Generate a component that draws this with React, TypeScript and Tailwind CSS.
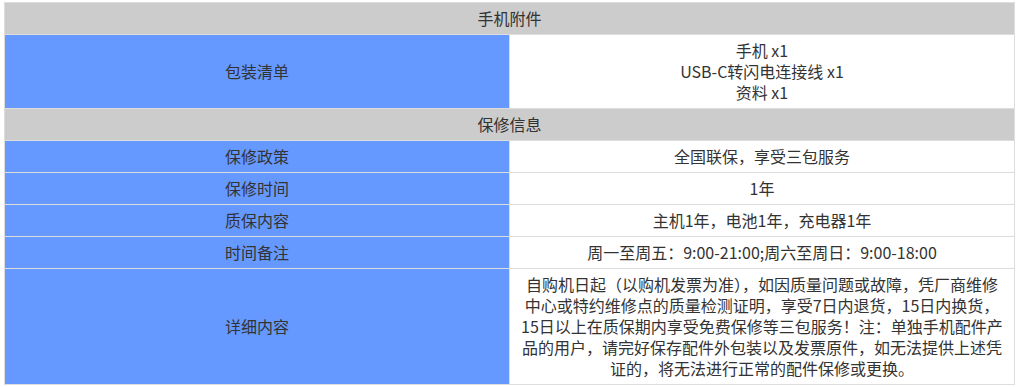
export default function App() {
  const warranty = [
    { label: "保修政策", value: "全国联保，享受三包服务" },
    { label: "保修时间", value: "1年" },
    { label: "质保内容", value: "主机1年，电池1年，充电器1年" },
    { label: "时间备注", value: "周一至周五：9:00-21:00;周六至周日：9:00-18:00" },
  ];

  const cell = "border border-[#dddddd] px-[10px] py-[5px] text-center align-middle";

  return (
    <div className="pl-[4px] pt-[2px] bg-white font-['Noto_Sans_CJK_SC',sans-serif] text-[16px] leading-[21px] text-[#333333]">
      <table className="w-[1011px] border-collapse table-fixed">
        <tbody>
          <tr>
            <th colSpan={2} className={`${cell} bg-[#cccccc] font-normal`}>
              手机附件
            </th>
          </tr>
          <tr>
            <td className={`${cell} w-[505px] bg-[#6699ff]`}>包装清单</td>
            <td className={cell}>
              手机 x1
              <br />
              USB-C转闪电连接线 x1
              <br />
              资料 x1
            </td>
          </tr>
          <tr>
            <th colSpan={2} className={`${cell} bg-[#cccccc] font-normal`}>
              保修信息
            </th>
          </tr>
          {warranty.map((row) => (
            <tr key={row.label}>
              <td className={`${cell} bg-[#6699ff]`}>{row.label}</td>
              <td className={cell}>{row.value}</td>
            </tr>
          ))}
          <tr>
            <td className={`${cell} bg-[#6699ff]`}>详细内容</td>
            <td className={cell}>
              自购机日起（以购机发票为准），如因质量问题或故障，凭厂商维修中心或特约维修点的质量检测证明，享受7日内退货，15日内换货，15日以上在质保期内享受免费保修等三包服务！注：单独手机配件产品的用户，请完好保存配件外包装以及发票原件，如无法提供上述凭证的，将无法进行正常的配件保修或更换。
            </td>
          </tr>
        </tbody>
      </table>
    </div>
  );
}
